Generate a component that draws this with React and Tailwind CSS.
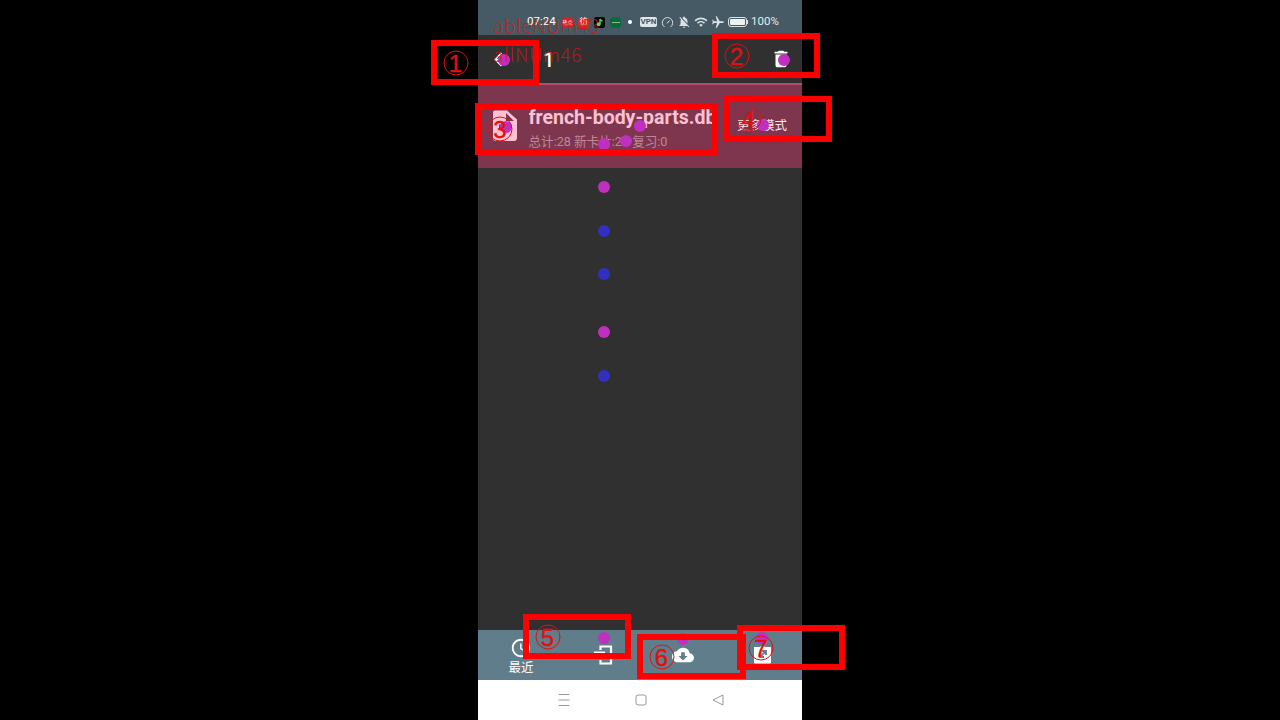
import { MdDelete, MdCloudDownload, MdAccessTime, MdAirplanemodeActive, MdNotificationsOff, MdWifi } from "react-icons/md";

const dots = [
  [504, 60], [784, 60], [506, 127], [640, 126], [604, 144], [625.5, 141], [763, 125],
  [604, 187.4], [604, 332.4], [604, 638], [683, 639], [762, 638],
];
const blueDots = [[604, 230.6], [604, 273.6], [604, 375.6]];

const boxes = [
  { n: 1, x: 431, y: 40, w: 108, h: 45, cx: 455.5, cy: 63 },
  { n: 2, x: 712, y: 33, w: 108, h: 45, cx: 736.5, cy: 56 },
  { n: 3, x: 475, y: 103, w: 243, h: 52, cx: 500, cy: 129 },
  { n: 4, x: 724, y: 96, w: 108, h: 46, cx: 748.5, cy: 119 },
  { n: 5, x: 523, y: 614, w: 108, h: 45, cx: 547.5, cy: 637 },
  { n: 6, x: 637, y: 634, w: 109, h: 45, cx: 661.5, cy: 657 },
  { n: 7, x: 737, y: 625, w: 108, h: 45, cx: 761, cy: 648 },
];

function StatusBar() {
  return (
    <div className="flex h-[35px] items-center bg-[#455a64] pt-[9px] pl-[49px] text-[11.5px] leading-none text-white">
      <span className="w-[35px] text-[11.5px]">07:24</span>
      <div className="flex gap-[5px]">
        <span className="flex h-[11px] w-[11px] items-center justify-center rounded-sm bg-[#d91f2b] text-[5px]">热点</span>
        <span className="flex h-[11px] w-[11px] items-center justify-center rounded-sm bg-[#e0241f] text-[8px]">彷</span>
        <svg className="h-[11px] w-[11px]" viewBox="0 0 11 11">
          <rect width="11" height="11" rx="2" fill="#050505" />
          <path d="M6 7V2c.4 1.300 1.200 1.800 2.500 2" fill="none" stroke="#4fd964" strokeWidth="1.400" />
          <circle cx="4.600" cy="7.200" r="2" fill="#4fd964" />
        </svg>
        <span className="flex h-[11px] w-[11px] items-center justify-center rounded-sm bg-[#086b38]"><i className="h-px w-2 bg-[#88b79b]" /></span>
      </div>
      <i className="ml-[7px] h-1 w-1 rounded-full bg-white" />
      <span className="ml-2 flex h-[10px] w-[17px] items-center justify-center rounded-[2px] bg-[#dfe5e8] text-[8px] font-bold text-[#455a64]">VPN</span>
      <svg className="ml-1 h-[13px] w-[13px]" viewBox="0 0 13 13" fill="none" stroke="#dbe2e5"><path d="M3.500 11A5.200 5.200 0 1 1 9.500 11M6 7.500 8.500 4.500" /></svg>
      <MdNotificationsOff className="ml-[3px] h-[14px] w-[14px] text-[#dbe2e5]" />
      <MdWifi className="ml-[3px] h-[14px] w-[14px] text-[#dbe2e5]" />
      <MdAirplanemodeActive className="ml-[3px] h-[14px] w-[14px] rotate-90 text-[#dbe2e5]" />
      <span className="ml-[3px] h-[10px] w-[19px] rounded-[3px] border border-[#dbe2e5] p-px"><i className="block h-full rounded-[1px] bg-[#eef2f3]" /></span>
      <i className="h-1 w-px bg-[#dbe2e5]" />
      <span className="ml-[3px] text-[11.5px] text-[#e5eaec]">100%</span>
    </div>
  );
}

export default function App() {
  return (
    <div className="relative h-[720px] w-[1280px] overflow-hidden bg-black font-[Roboto,'Noto_Sans_CJK_SC',sans-serif]">
      <div className="mx-auto flex h-full w-[324px] flex-col bg-[#303030]">
        <StatusBar />
        <div className="flex h-12 items-center pl-[14px] pr-[10px] text-white">
          <svg className="h-[18px] w-[18px]" viewBox="0 0 18 18" fill="none" stroke="white" strokeWidth="1.500"><path d="M9.500 3 3 9.500l6.500 6.500M3 9.500h12" /></svg>
          <span className="ml-[33px] pt-px text-[20px] font-medium">1</span>
          <MdDelete className="ml-auto h-[22px] w-[22px]" />
        </div>
        <div className="flex h-[85px] border-t-2 border-[#bb4a70] bg-[#7e364e] pl-[11px] pt-[20px]">
          <svg className="mt-[2px] h-[38px] w-8 shrink-0" viewBox="0 0 32 38">
            <path fill="#ffc1d3" d="M6 3.500h12l10 9V31a3 3 0 0 1-3 3H7a3 3 0 0 1-3-3V5.500a2 2 0 0 1 2-2z" />
            <path fill="#7e364e" d="M17 6v8h8zM10 17.500h7V15l6 5-6 5v-2.500h-7z" />
          </svg>
          <div className="ml-[7.500px] w-[185px]">
            <div className="overflow-hidden pt-px whitespace-nowrap text-[19.500px] leading-6 font-bold text-[#ffc1d3]">french-body-parts.db</div>
            <div className="whitespace-nowrap text-[12.600px] leading-[23px] text-[#bf8799]">总计:28 新卡片:28 复习:0</div>
          </div>
          <span className="ml-[23.500px] mt-[11px] text-[12.500px] leading-5 whitespace-nowrap text-[#ffe5ec]">更多模式</span>
        </div>
        <div className="flex-1" />
        <div className="grid h-[50px] grid-cols-[86px_79px_80px_79px] bg-[#607d8b] text-white">
          <div className="flex flex-col items-center pt-[7px]">
            <MdAccessTime className="h-[22px] w-[22px]" />
            <span className="text-[12.500px] leading-[17px]">最近</span>
          </div>
          <div className="flex justify-center pt-[14px]">
            <svg className="h-[22px] w-[22px]" viewBox="0 0 22 22" fill="none" stroke="white" strokeWidth="2.200"><path d="M7.500 6V2.500h10.500v17H7.500V16M1 8.500h10v5H1" /></svg>
          </div>
          <div className="flex justify-center pt-[14px]"><MdCloudDownload className="h-[22px] w-[22px]" /></div>
          <div className="flex justify-center pt-[14px]">
            <svg className="h-[22px] w-[22px]" viewBox="0 0 22 22"><path fill="white" d="M2 3h6a3 3 0 0 1 5 0h6v15a1.500 1.500 0 0 1-1.500 1.500h-14A1.500 1.500 0 0 1 2 18z" /><path stroke="#607d8b" strokeWidth="1.800" d="m8 13 5-5M8 9v4h4M10 7h4v4" fill="none" /></svg>
          </div>
        </div>
        <div className="flex h-10 items-center justify-between bg-white pr-[77px] pl-[79px]">
          <svg className="h-[14px] w-[14px]" viewBox="0 0 14 14" stroke="#999"><path d="M1.500 1.500h11M1.500 7h11M1.500 12.500h11" /></svg>
          <svg className="h-[14px] w-[14px]" viewBox="0 0 14 14" stroke="#999" fill="none"><rect x="2" y="2" width="10" height="10" rx="2" /></svg>
          <svg className="h-[14px] w-[14px]" viewBox="0 0 14 14" stroke="#999" fill="none"><path d="M12 2v10L2 7z" strokeLinejoin="round" /></svg>
        </div>
      </div>

      {dots.map(([x, y]) => <i key={`${x}-${y}`} className="absolute h-3 w-3 -translate-x-1/2 -translate-y-1/2 rounded-full bg-[#c030c0]" style={{ left: x, top: y }} />)}
      {blueDots.map(([x, y]) => <i key={y} className="absolute h-3 w-3 -translate-x-1/2 -translate-y-1/2 rounded-full bg-[#3030c0]" style={{ left: x, top: y }} />)}
      {boxes.map((b) => (
        <div key={b.n}>
          <div className="absolute border-6 border-[#ff0000]" style={{ left: b.x, top: b.y, width: b.w, height: b.h }} />
          <span className="absolute flex h-[25px] w-[25px] -translate-x-1/2 -translate-y-1/2 items-center justify-center rounded-full border-[1.5px] border-[#e01010] font-['Liberation_Sans',sans-serif] text-[24px] leading-none text-[#e01010] [-webkit-text-stroke:0.4px_#e01010]" style={{ left: b.cx, top: b.cy }}>{b.n}</span>
        </div>
      ))}
      <div className="absolute left-[493px] top-[10px] font-['Noto_Sans_CJK_SC',sans-serif] text-[19px] leading-[29px] font-light tracking-[0.500px] whitespace-nowrap text-[#e01010]/75">
        <div className="tracking-[0.600px]">ableNUm43</div>
        <div>allNUm46</div>
      </div>
    </div>
  );
}
